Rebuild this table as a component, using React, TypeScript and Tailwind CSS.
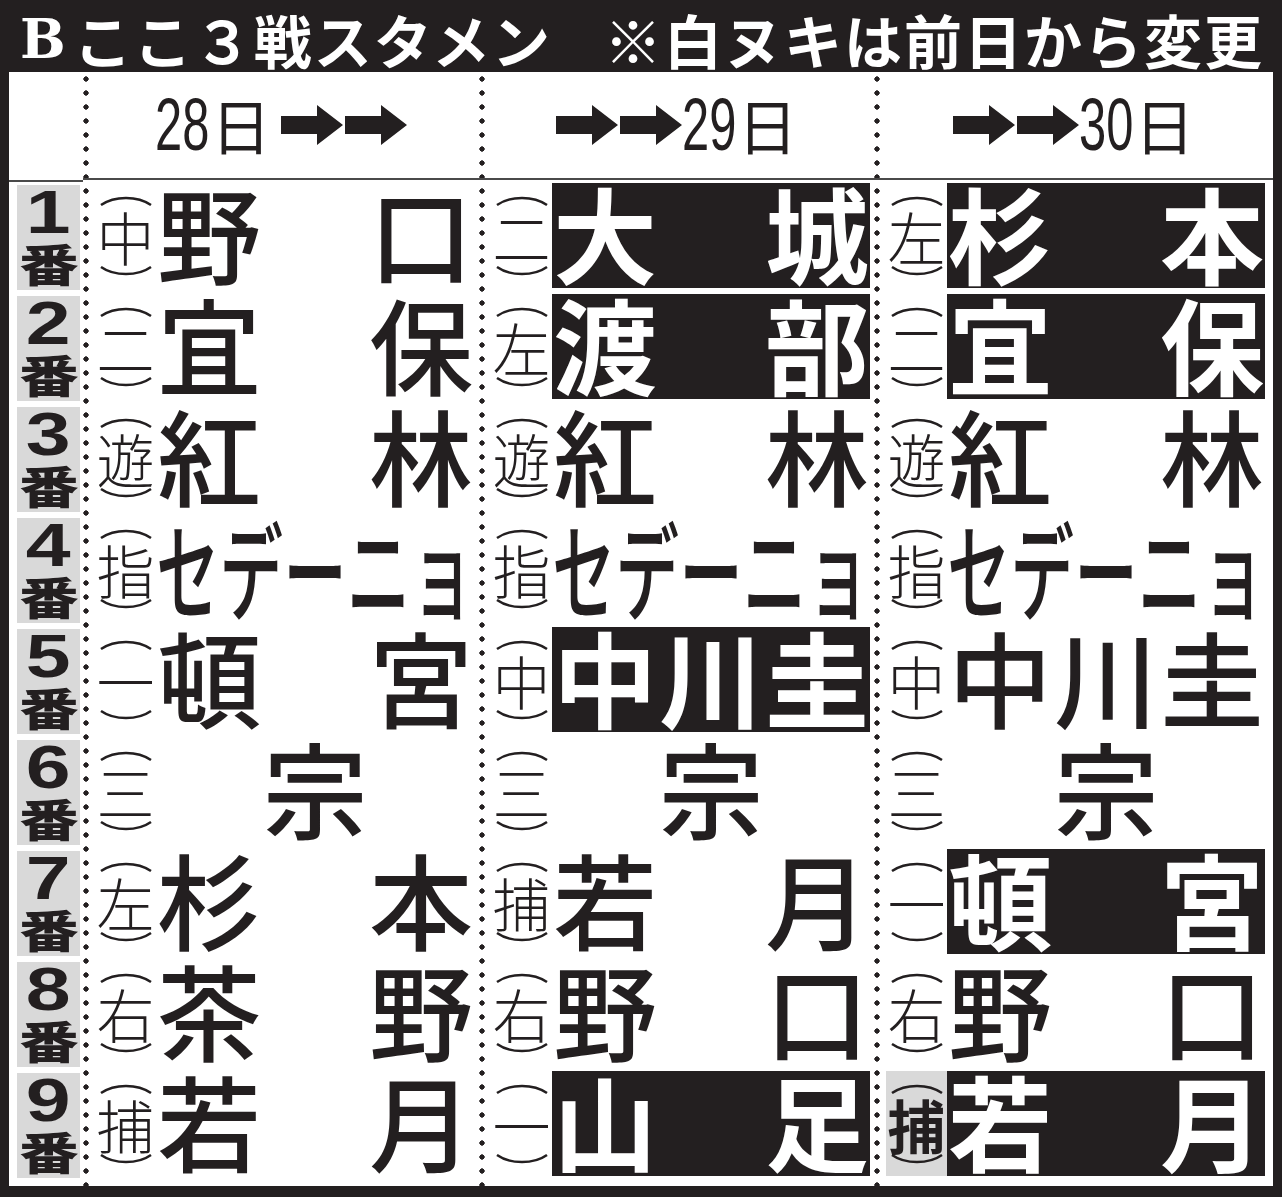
import React from 'react';

type Entry = { pos: string; name: string; hl?: boolean; posHl?: boolean };

const days: { label: string; arrowsFirst: boolean; rows: Entry[] }[] = [
  {
    label: '28',
    arrowsFirst: false,
    rows: [
      { pos: '中', name: '野口' },
      { pos: '二', name: '宜保' },
      { pos: '遊', name: '紅林' },
      { pos: '指', name: 'セデーニョ' },
      { pos: '一', name: '頓宮' },
      { pos: '三', name: '宗' },
      { pos: '左', name: '杉本' },
      { pos: '右', name: '茶野' },
      { pos: '捕', name: '若月' },
    ],
  },
  {
    label: '29',
    arrowsFirst: true,
    rows: [
      { pos: '二', name: '大城', hl: true },
      { pos: '左', name: '渡部', hl: true },
      { pos: '遊', name: '紅林' },
      { pos: '指', name: 'セデーニョ' },
      { pos: '中', name: '中川圭', hl: true },
      { pos: '三', name: '宗' },
      { pos: '捕', name: '若月' },
      { pos: '右', name: '野口' },
      { pos: '一', name: '山足', hl: true },
    ],
  },
  {
    label: '30',
    arrowsFirst: true,
    rows: [
      { pos: '左', name: '杉本', hl: true },
      { pos: '二', name: '宜保', hl: true },
      { pos: '遊', name: '紅林' },
      { pos: '指', name: 'セデーニョ' },
      { pos: '中', name: '中川圭' },
      { pos: '三', name: '宗' },
      { pos: '一', name: '頓宮', hl: true },
      { pos: '右', name: '野口' },
      { pos: '捕', name: '若月', hl: true, posHl: true },
    ],
  },
];

const colWidths = ['w-[396px]', 'w-[395px]', 'w-[399px]'];

const Arrows = () => (
  <svg width="126" height="40" viewBox="0 0 126 40" className="block shrink-0">
    <path d="M0 11h36V0l26 20-26 20V29H0z" fill="#231f20" />
    <path d="M64 11h36V0l26 20-26 20V29H64z" fill="#231f20" />
  </svg>
);

const Arc = ({ down }: { down?: boolean }) => (
  <svg width="56" height="12" viewBox="0 0 56 12" className="block">
    {down ? (
      <path d="M3 2 A34 22 0 0 0 53 2" fill="none" stroke="#231f20" strokeWidth="2.5" />
    ) : (
      <path d="M3 10 A34 22 0 0 1 53 10" fill="none" stroke="#231f20" strokeWidth="2.5" />
    )}
  </svg>
);

const DateCell = ({ label, arrowsFirst }: { label: string; arrowsFirst: boolean }) => (
  <div className="flex h-[108px] items-center justify-center border-b-2 border-[#4a4a4a]">
    {arrowsFirst && <Arrows />}
    <div className="flex items-baseline text-[#231f20]">
      <span className="inline-block w-[56px] origin-left scale-x-[0.66] whitespace-nowrap font-['Liberation_Sans',sans-serif] text-[74px] leading-none">
        {label}
      </span>
      <span className="font-['Noto_Sans_CJK_JP',sans-serif] text-[60px] leading-none">日</span>
    </div>
    {!arrowsFirst && (
      <div className="ml-[10px]">
        <Arrows />
      </div>
    )}
  </div>
);

const Name = ({ name, hl }: { name: string; hl?: boolean }) => {
  const tone = hl ? 'bg-[#231f20] text-white font-bold' : 'text-[#231f20] font-medium';
  if (name === 'セデーニョ') {
    return (
      <div className={`flex h-[105px] w-[318px] items-center justify-center overflow-visible text-[106px] leading-none ${tone}`}>
        <span className="inline-block translate-y-[-3px] scale-x-[0.6] whitespace-nowrap">{name}</span>
      </div>
    );
  }
  const chars = name.split('');
  return (
    <div
      className={`flex h-[105px] w-[318px] items-center px-[1px] text-[104px] leading-none ${
        chars.length === 1 ? 'justify-center' : 'justify-between'
      } ${tone}`}
    >
      {chars.map((c, i) => (
        <span key={i} className="block translate-y-[-4px]">
          {c}
        </span>
      ))}
    </div>
  );
};

const Row = ({ e }: { e: Entry }) => (
  <div className="flex h-[111px] items-center">
    <div
      className={`ml-[12px] flex h-[105px] w-[61px] flex-col items-center justify-center text-[#231f20] ${
        e.posHl ? 'bg-[#d9d9d9] font-bold' : 'font-light'
      }`}
    >
      <Arc />
      <span className="block text-[58px] leading-[58px]">{e.pos}</span>
      <Arc down />
    </div>
    <Name name={e.name} hl={e.hl} />
  </div>
);

export default function App() {
  return (
    <div className="flex h-[1197px] w-[1282px] flex-col bg-[#231f20] font-['Noto_Sans_CJK_JP',sans-serif]">
      <header className="flex h-[72px] items-center justify-between pl-[20px] pr-[18px] pt-[6px] text-white">
        <div className="flex items-center">
          <span className="font-['DejaVu_Serif',serif] text-[54px] font-bold leading-[66px]">B</span>
          <span className="ml-[8px] text-[58px] font-bold leading-[66px] tracking-[2px]">ここ３戦スタメン</span>
        </div>
        <span className="text-[58px] font-bold leading-[66px] tracking-[2px]">※白ヌキは前日から変更</span>
      </header>

      <div className="mx-[9px] flex h-[1114px] bg-white">
        <div className="flex w-[74px] flex-col">
          <div className="h-[110px] border-b-2 border-[#4a4a4a]" />
          {Array.from({ length: 9 }, (_, i) => (
            <div key={i} className="flex h-[111px] items-center">
              <div className="ml-[8px] flex h-[105px] w-[63px] flex-col items-center justify-center bg-[#d9d9d9] text-[#231f20]">
                <span className="inline-block scale-x-[1.3] font-['Liberation_Sans',sans-serif] text-[62px] font-bold leading-[50px]">
                  {i + 1}
                </span>
                <span className="inline-block scale-x-[1.1] scale-y-[0.82] text-[54px] font-black leading-[52px]">番</span>
              </div>
            </div>
          ))}
        </div>

        {days.map((d, di) => (
          <div
            key={d.label}
            className={`${colWidths[di]} flex flex-col bg-[radial-gradient(circle_at_3px_7px,#231f20_2.4px,transparent_2.9px)] bg-[length:100%_14px] bg-repeat-y`}
          >
            <DateCell label={d.label} arrowsFirst={d.arrowsFirst} />
            {d.rows.map((e, i) => (
              <Row key={i} e={e} />
            ))}
          </div>
        ))}
      </div>
    </div>
  );
}
